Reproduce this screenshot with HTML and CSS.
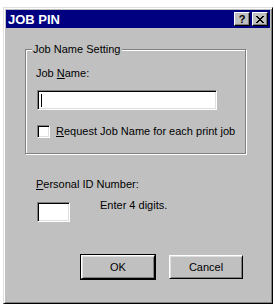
FILE: index.html
```html
<!DOCTYPE html>
<html lang="en">
<head>
    <meta charset="UTF-8">
    <title>JOB PIN</title>
    <link rel="stylesheet" href="styles.css">
</head>
<body>
    <div class="window">
        <div class="titlebar">
            <span class="title">JOB PIN</span>
            <div class="title-buttons">
                <span class="tbtn help">?</span>
                <span class="tbtn close">
                    <svg width="8" height="7" viewBox="0 0 8 7">
                        <path d="M0 0h2v1h-2zM6 0h2v1h-2zM1 1h2v1h-2zM5 1h2v1h-2zM2 2h4v1h-4zM3 3h2v1h-2zM2 4h4v1h-4zM1 5h2v1h-2zM5 5h2v1h-2zM0 6h2v1h-2zM6 6h2v1h-2z" fill="#000"/>
                    </svg>
                </span>
            </div>
        </div>

        <div class="content">
            <div class="group">
                <span class="group-title">Job Name Setting</span>
                <div class="label">Job <u>N</u>ame:</div>
                <div class="field wide"><span class="caret"></span></div>
                <div class="check-row">
                    <span class="checkbox"></span>
                    <span><u>R</u>equest Job Name for each print job</span>
                </div>
            </div>

            <div class="label pin-label"><u>P</u>ersonal ID Number:</div>
            <div class="pin-row">
                <div class="field short"></div>
                <span class="hint">Enter 4 digits.</span>
            </div>

            <div class="buttons">
                <button class="btn default">OK</button>
                <button class="btn">Cancel</button>
            </div>
        </div>
    </div>
</body>
</html>
```

FILE: styles.css
```css
body {
    margin: 0;
    background-color: #fff;
    font-family: 'Liberation Sans', Arial, sans-serif;
    font-size: 11px;
    line-height: 13px;
    color: #000;
}
.window {
    margin: 7px 0 0 3px;
    width: 270px;
    height: 297px;
    box-sizing: border-box;
    padding: 2px;
    background-color: #c0c0c0;
    border: 1px solid;
    border-color: #dfdfdf #000 #000 #dfdfdf;
    box-shadow: inset 1px 1px #fff, inset -1px -1px #808080;
    overflow: hidden;
}
.titlebar {
    height: 18px;
    background-color: #000080;
    display: flex;
    align-items: center;
    justify-content: space-between;
    padding: 0 2px 0 2px;
}
.title {
    color: #fff;
    font-weight: bold;
    font-size: 13px;
}
.title-buttons {
    display: flex;
    gap: 2px;
}
.tbtn {
    width: 16px;
    height: 14px;
    box-sizing: border-box;
    background-color: #c0c0c0;
    border: 1px solid;
    border-color: #fff #000 #000 #fff;
    box-shadow: inset -1px -1px #808080;
    display: flex;
    align-items: center;
    justify-content: center;
    font-weight: bold;
    font-size: 11px;
    line-height: 11px;
}
.close svg {
    display: block;
}
.content {
    padding: 21px 0 0 19px;
}
.group {
    position: relative;
    width: 221px;
    height: 105px;
    box-sizing: border-box;
    border: 1px solid #808080;
    box-shadow: inset 1px 1px #fff, 1px 1px #fff;
    padding: 17px 0 0 10px;
}
.group-title {
    position: absolute;
    top: -7px;
    left: 6px;
    padding: 0 2px 0 1px;
    background-color: #c0c0c0;
}
.label u,
.check-row u {
    text-decoration-thickness: 1px;
    text-underline-offset: 1px;
}
.field {
    background-color: #fff;
    box-sizing: border-box;
    height: 20px;
    border: 1px solid;
    border-color: #808080 #fff #fff #808080;
    box-shadow: inset 1px 1px #000, inset -1px -1px #dfdfdf;
    position: relative;
}
.wide {
    width: 180px;
    margin: 10px 0 0 1px;
}
.caret {
    position: absolute;
    left: 3px;
    top: 3px;
    width: 1px;
    height: 13px;
    background-color: #000;
}
.check-row {
    display: flex;
    align-items: center;
    gap: 6px;
    margin: 15px 0 0 1px;
}
.checkbox {
    width: 13px;
    height: 13px;
    box-sizing: border-box;
    background-color: #fff;
    border: 1px solid;
    border-color: #808080 #fff #fff #808080;
    box-shadow: inset 1px 1px #000, inset -1px -1px #dfdfdf;
}
.pin-label {
    margin: 24px 0 0 11px;
}
.pin-row {
    display: flex;
    align-items: flex-start;
    margin: 11px 0 0 12px;
}
.short {
    width: 33px;
}
.hint {
    margin: -3px 0 0 30px;
}
.buttons {
    display: flex;
    gap: 14px;
    margin: 33px 0 0 56px;
}
.btn {
    width: 74px;
    height: 24px;
    box-sizing: border-box;
    background-color: #c0c0c0;
    font-family: 'Liberation Sans', Arial, sans-serif;
    font-size: 11px;
    color: #000;
    border: 1px solid;
    border-color: #fff #000 #000 #fff;
    box-shadow: inset 1px 1px #dfdfdf, inset -1px -1px #808080;
    padding: 0;
}
.btn.default {
    outline: 1px solid #000;
}
```
